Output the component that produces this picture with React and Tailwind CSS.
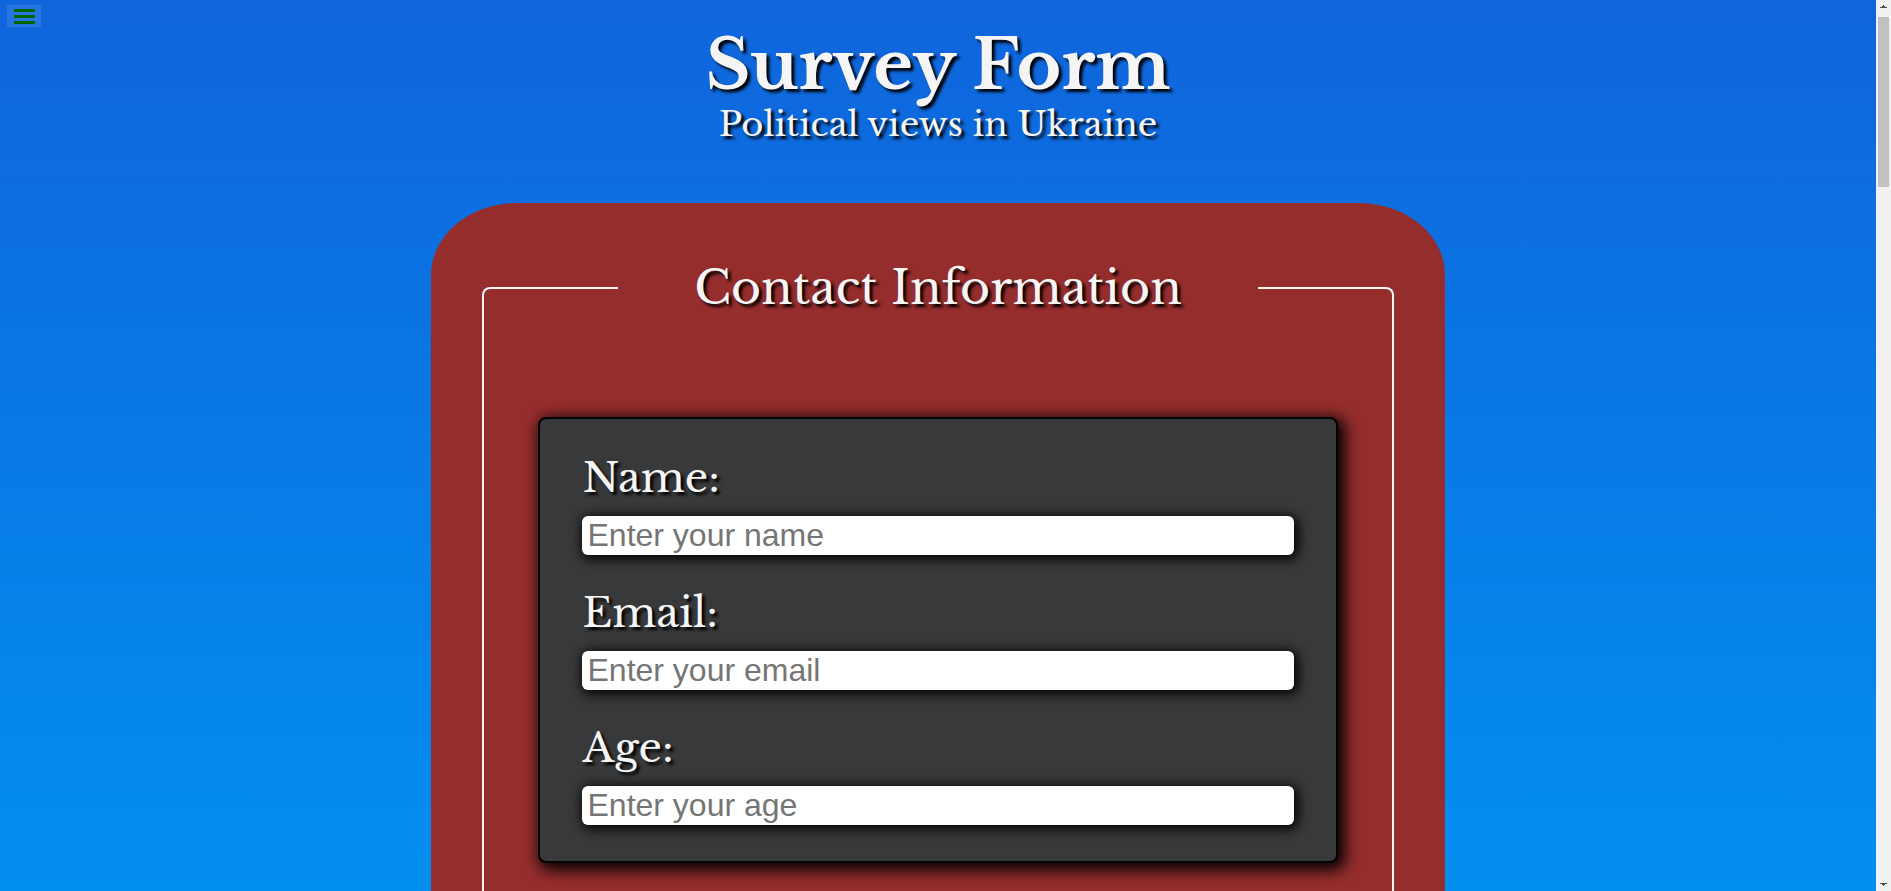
const fields = [
  { id: "name", label: "Name:", type: "text", placeholder: "Enter your name" },
  { id: "email", label: "Email:", type: "email", placeholder: "Enter your email" },
  { id: "age", label: "Age:", type: "text", placeholder: "Enter your age" },
];

function MenuButton() {
  return (
    <button
      type="button"
      aria-label="Menu"
      className="absolute top-[5px] left-[7px] flex h-[22px] w-[34px] flex-col items-center justify-center gap-[3px] bg-white/10"
    >
      <span className="h-[3px] w-[21px] rounded-[1px] bg-[#006400]" />
      <span className="h-[3px] w-[21px] rounded-[1px] bg-[#006400]" />
      <span className="h-[3px] w-[21px] rounded-[1px] bg-[#006400]" />
    </button>
  );
}

function Field({ id, label, type, placeholder }) {
  return (
    <div className="flex flex-col gap-[14px]">
      <label
        htmlFor={id}
        className="text-[41px] leading-[48px] [text-shadow:3px_3px_3px_#000]"
      >
        {label}
      </label>
      <input
        id={id}
        type={type}
        placeholder={placeholder}
        className="h-[39px] w-full rounded-md bg-white px-[5px] font-['Liberation_Sans',Arial,sans-serif] text-[32px] leading-[39px] text-black shadow-[2px_2px_12px_2px_#000] outline-none placeholder:text-[#757575]"
      />
    </div>
  );
}

function ScrollBar() {
  return (
    <div aria-hidden="true" className="flex w-[15px] shrink-0 flex-col items-center justify-between bg-[#f1f1f1]">
      <div className="flex w-full flex-col items-center">
        <svg className="h-[17px] w-[15px]" viewBox="0 0 15 17" shapeRendering="crispEdges">
          <path d="M7 5h1v1h1v1h2v1H4V7h2V6h1z" fill="#505050" />
        </svg>
        <div className="h-[170px] w-[11px] bg-[#c1c1c1]" />
      </div>
      <svg className="h-[10px] w-[15px]" viewBox="0 0 15 10" shapeRendering="crispEdges">
        <path d="M4 2h7v1H9v1H8v1H7V4H6V3H4z" fill="#505050" />
      </svg>
    </div>
  );
}

export default function App() {
  return (
    <div className="flex h-screen overflow-hidden font-['Libre_Baskerville','DejaVu_Serif',serif] text-[#f5f5f5]">
      <main className="relative flex min-w-0 flex-1 flex-col items-center bg-linear-to-b from-[#1064dc] to-[#038fef]">
        <MenuButton />
        <header className="mt-[30px] mb-[59px] flex flex-col gap-[4px] text-center [text-shadow:3px_3px_3px_#000]">
          <h1 className="text-[68px] leading-[70px] font-bold">Survey Form</h1>
          <p className="text-[34px] leading-[40px]">Political views in Ukraine</p>
        </header>
        <form className="flex w-[54%] flex-1 flex-col rounded-t-[86px_72px] bg-[#952d2d] px-[51px] pt-[55px]">
          <fieldset className="min-w-0 flex-1 rounded-t-lg border-2 border-b-0 border-[#f5f5f5] px-[54px] pt-[99px]">
            <legend className="mx-auto px-[76px] text-[46px] leading-[60px] [text-shadow:3px_3px_3px_#000]">
              Contact Information
            </legend>
            <div className="flex flex-col gap-[34px] rounded-lg border-2 border-black bg-[#38393a] px-[42px] pt-[35px] pb-[36px] shadow-[4px_4px_15px_3px_#000]">
              {fields.map((field) => (
                <Field key={field.id} {...field} />
              ))}
            </div>
          </fieldset>
        </form>
      </main>
      <ScrollBar />
    </div>
  );
}
